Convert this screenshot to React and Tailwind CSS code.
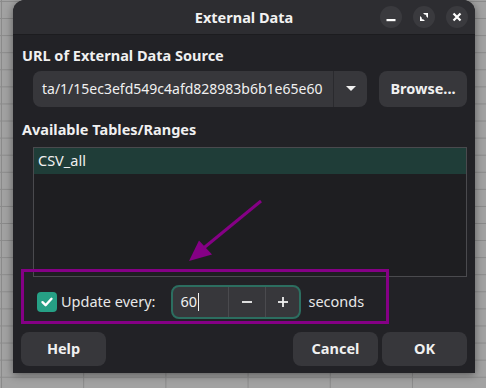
import React from "react";

function WinBtn({ children }) {
  return (
    <div className="w-[22px] h-[22px] rounded-full bg-[#3a3a3e] flex items-center justify-center">
      {children}
    </div>
  );
}

export default function App() {
  return (
    <div
      className="w-[486px] h-[388px] overflow-hidden relative bg-[#a2a2a2] bg-[linear-gradient(to_right,#8a8a8a_1px,transparent_1px),linear-gradient(to_bottom,#8a8a8a_1px,transparent_1px)] bg-[size:82.2px_17.08px] bg-[position:1px_1px] pl-[13px] pt-0"
      style={{ fontFamily: '"Noto Sans", "Open Sans", sans-serif' }}
    >
      <div className="w-[462px] h-[373px] rounded-t-[12px] bg-[#222226] shadow-[0_2px_8px_rgba(0,0,0,0.45)] flex flex-col text-[#f0f0f0]">
        {/* header */}
        <div className="h-[35px] rounded-t-[12px] bg-[#2d2d31] border-b border-[#1c1c1f] relative flex items-center justify-center">
          <span className="text-[14.5px] font-bold leading-none text-[#f2f2f2]">External Data</span>
          <div className="absolute right-[7px] top-[6px] flex gap-[11px]">
            <WinBtn>
              <svg width="12" height="12" viewBox="0 0 12 12">
                <rect x="1.5" y="8" width="9" height="2.2" fill="#fff" />
              </svg>
            </WinBtn>
            <WinBtn>
              <svg width="12" height="12" viewBox="0 0 12 12">
                <polygon points="5,2 10,2 10,7 8.2,5.2 8.2,3.8 6.8,3.8" fill="#fff" />
                <polygon points="2,5 2,10 7,10 5.2,8.2 3.8,8.2 3.8,6.8" fill="#fff" />
              </svg>
            </WinBtn>
            <WinBtn>
              <svg width="12" height="12" viewBox="0 0 12 12">
                <path d="M2.5 2.5 L9.5 9.5 M9.5 2.5 L2.5 9.5" stroke="#fff" strokeWidth="2.2" />
              </svg>
            </WinBtn>
          </div>
        </div>

        {/* body */}
        <div className="flex-1 flex flex-col px-[8px] pt-[10px] relative">
          <div className="ml-[1px] text-[14.5px] font-bold leading-[20px]">URL of External Data Source</div>
          <div className="mt-[6px] ml-[12px] flex gap-[12px]">
            <div className="w-[334px] h-[36px] rounded-[8px] bg-[#37373b] flex items-center">
              <div className="flex-1 pl-[9px] text-[14px] leading-none text-[#f0f0f0] whitespace-nowrap">
                ta/1/15ec3efd549c4afd828983b6b1e65e60
              </div>
              <div className="w-px h-full bg-[#2a2a2e]" />
              <div className="w-[33px] h-full flex items-center justify-center">
                <svg width="10" height="6" viewBox="0 0 10 6">
                  <polygon points="0,0 10,0 5,5" fill="#f0f0f0" />
                </svg>
              </div>
            </div>
            <div className="w-[88px] h-[36px] rounded-[8px] bg-[#37373b] flex items-center justify-center text-[14.5px] font-bold">
              Browse...
            </div>
          </div>

          <div className="mt-[12px] ml-[1px] text-[14.5px] font-bold leading-[20px]">Available Tables/Ranges</div>
          <div className="mt-[8px] ml-[12px] h-[130px] border border-[#4a4a4e] bg-[#1e1e21]">
            <div className="h-[26px] bg-[#1f3d38] flex items-center pl-[4px] text-[14.5px] text-[#f0f0f0]">CSV_all</div>
          </div>

          <div className="mt-[8px] ml-[16px] h-[34px] flex items-center">
            <div className="w-[20px] h-[20px] rounded-[4px] bg-[#26a085] flex items-center justify-center">
              <svg width="14" height="14" viewBox="0 0 14 14">
                <path d="M2.5 7.2 L5.6 10.2 L11.5 3.8" stroke="#fff" strokeWidth="2.4" fill="none" strokeLinecap="round" strokeLinejoin="round" />
              </svg>
            </div>
            <span className="ml-[4px] text-[14.5px] text-[#e8e8e8]">Update every:</span>
            <div className="ml-[16px] w-[130px] h-[34px] rounded-[8px] border-2 border-[#2c6e60] bg-[#37373b] flex items-stretch">
              <div className="w-[55px] flex items-center pl-[7px] text-[14.5px] text-[#f0f0f0]">
                60<span className="inline-block w-px h-[18px] bg-[#f0f0f0] ml-[1px]" />
              </div>
              <div className="w-px bg-[#4a4a4e]" />
              <div className="w-[36px] flex items-center justify-center">
                <svg width="12" height="12" viewBox="0 0 12 12"><rect x="1" y="5.1" width="10" height="1.8" fill="#f0f0f0" /></svg>
              </div>
              <div className="w-px bg-[#4a4a4e]" />
              <div className="flex-1 flex items-center justify-center">
                <svg width="12" height="12" viewBox="0 0 12 12">
                  <rect x="1" y="5.1" width="10" height="1.8" fill="#f0f0f0" />
                  <rect x="5.1" y="1" width="1.8" height="10" fill="#f0f0f0" />
                </svg>
              </div>
            </div>
            <span className="ml-[7px] text-[14.5px] text-[#e8e8e8]">seconds</span>
          </div>

          <div className="mt-[13px] flex">
            <div className="w-[85px] h-[34px] rounded-[8px] bg-[#37373b] flex items-center justify-center text-[14.5px] font-bold">Help</div>
            <div className="flex-1" />
            <div className="w-[85px] h-[34px] rounded-[8px] bg-[#37373b] flex items-center justify-center text-[14.5px] font-bold">Cancel</div>
            <div className="ml-[4px] w-[85px] h-[34px] rounded-[8px] bg-[#37373b] flex items-center justify-center text-[14.5px] font-bold">OK</div>
          </div>
        </div>
      </div>

      {/* annotation overlay */}
      <div className="absolute left-[21px] top-[269px] w-[368px] h-[55px] border-[3px] border-[#850085] pointer-events-none" />
      <svg className="absolute left-0 top-0 pointer-events-none" width="486" height="388">
        <line x1="261" y1="201" x2="200" y2="251" stroke="#850085" strokeWidth="3" />
        <polygon points="189,261 199,240.5 212,254.5" fill="#850085" />
      </svg>
    </div>
  );
}
